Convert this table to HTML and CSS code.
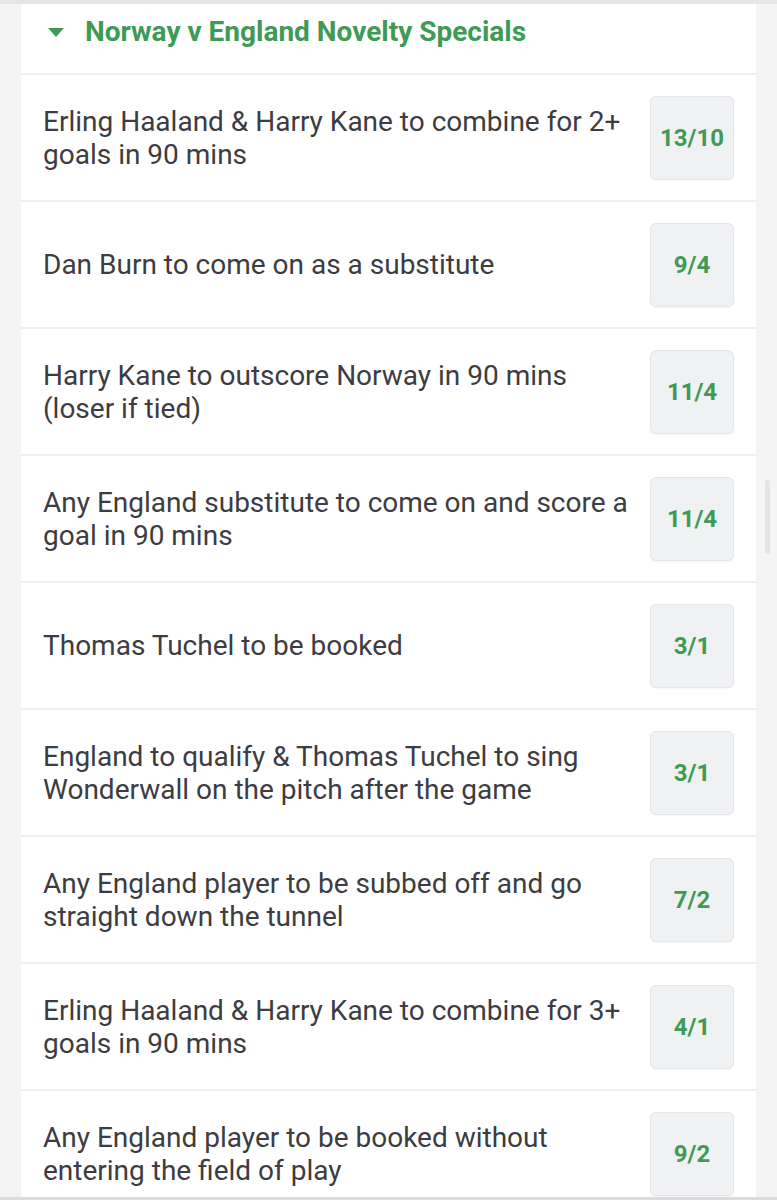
FILE: index.html
```html
<!DOCTYPE html>
<html lang="en">
<head>
  <meta charset="UTF-8" />
  <meta name="viewport" content="width=device-width, initial-scale=1.0" />
  <title>Novelty Specials</title>
  <link rel="stylesheet" href="styles.css">
</head>
<body>
  <div class="topbar"></div>

  <div class="market">
    <div class="market-header">
      <span class="caret"></span>
      <h2>Norway v England Novelty Specials</h2>
    </div>

    <div class="selection">
      <p>Erling Haaland &amp; Harry Kane to combine for 2+ goals in 90 mins</p>
      <button class="odds">13/10</button>
    </div>
    <div class="selection">
      <p>Dan Burn to come on as a substitute</p>
      <button class="odds">9/4</button>
    </div>
    <div class="selection">
      <p>Harry Kane to outscore Norway in 90 mins (loser if tied)</p>
      <button class="odds">11/4</button>
    </div>
    <div class="selection">
      <p>Any England substitute to come on and score a goal in 90 mins</p>
      <button class="odds">11/4</button>
    </div>
    <div class="selection">
      <p>Thomas Tuchel to be booked</p>
      <button class="odds">3/1</button>
    </div>
    <div class="selection">
      <p>England to qualify &amp; Thomas Tuchel to sing Wonderwall on the pitch after the game</p>
      <button class="odds">3/1</button>
    </div>
    <div class="selection">
      <p>Any England player to be subbed off and go straight down the tunnel</p>
      <button class="odds">7/2</button>
    </div>
    <div class="selection">
      <p>Erling Haaland &amp; Harry Kane to combine for 3+ goals in 90 mins</p>
      <button class="odds">4/1</button>
    </div>
    <div class="selection">
      <p>Any England player to be booked without entering the field of play</p>
      <button class="odds">9/2</button>
    </div>
  </div>

  <div class="scrollbar"></div>
  <div class="bottom-edge"></div>
</body>
</html>
```

FILE: styles.css
```css
* {
  box-sizing: border-box;
  margin: 0;
  padding: 0;
}

body {
  font-family: Roboto, 'Noto Sans', sans-serif;
  background: #f4f4f5;
  color: #3c3c42;
  overflow: hidden;
  height: 1200px;
}

.topbar {
  height: 4px;
  background: #e6e6e8;
}

.market {
  margin: 0 21px 0 21px;
  background: #fff;
}

.market-header {
  height: 71px;
  display: flex;
  align-items: flex-start;
  gap: 21px;
  padding: 12px 22px 0 27px;
  border-bottom: 2px solid #eeeeef;
}

.caret {
  width: 0;
  height: 0;
  margin-top: 12px;
  border-left: 8px solid transparent;
  border-right: 8px solid transparent;
  border-top: 9px solid #3e9a55;
}

.market-header h2 {
  font-size: 28px;
  font-weight: 700;
  color: #3e9a55;
  line-height: 32px;
}

.selection {
  height: 127px;
  display: flex;
  align-items: center;
  gap: 14px;
  padding: 0 22px;
  border-bottom: 2px solid #eeeeef;
}

.selection p {
  flex: 1;
  font-size: 28px;
  line-height: 33px;
}

.odds {
  width: 84px;
  height: 84px;
  flex-shrink: 0;
  background: #f0f1f3;
  border: 1px solid #e3e5e8;
  border-radius: 6px;
  box-shadow: 0 1px 2px rgba(0, 0, 0, 0.04);
  font-family: Roboto, 'Noto Sans', sans-serif;
  font-size: 24px;
  font-weight: 700;
  color: #3e9a55;
}

.scrollbar {
  position: fixed;
  top: 480px;
  right: 7px;
  width: 5px;
  height: 74px;
  background: #e4e4e6;
  border-radius: 3px;
}

.bottom-edge {
  position: fixed;
  left: 0;
  right: 0;
  bottom: 0;
  height: 3px;
  background: #dcdcde;
}
```
